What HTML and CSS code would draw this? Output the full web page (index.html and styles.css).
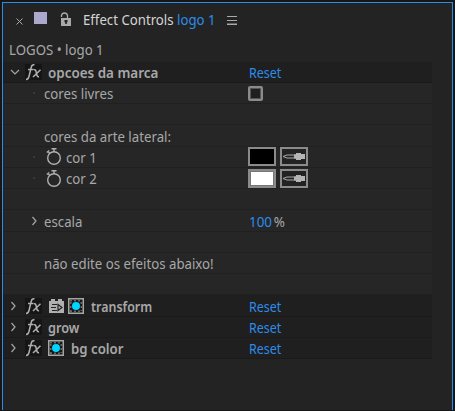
FILE: index.html
```html
<!DOCTYPE html>
<html lang="pt">
<head>
<meta charset="utf-8">
<title>Effect Controls</title>
<link rel="stylesheet" href="styles.css">
</head>
<body>
<svg class="defs" aria-hidden="true">
  <symbol id="right" viewBox="0 0 7 10"><path d="M1.500 1 5 5 1.500 9" fill="none" stroke="#a5a5a5" stroke-width="1.200"/></symbol>
  <symbol id="fx" viewBox="0 0 17 18"><path fill="#151515" d="M0 1h17v16H0z"/><path d="M1 16.500c2 0 2.500-1 3-3L6.300 4c.4-2 1.400-2.500 3.200-2.200M3 6.500h5.500M9 7c1.500-.8 2 .6 2.500 3.500s1.200 3.500 2.500 3M15.500 6.800 8 14" fill="none" stroke="#b0b0b0" stroke-width="1.500"/></symbol>
  <symbol id="watch" viewBox="0 0 16 17"><circle cx="8" cy="10" r="6.300" fill="none" stroke="#b0b0b0" stroke-width="1.400"/><path d="M5.500 .8h5M8 1v3M.8 4.500 3.300 2.500M2 3.500l2 2" fill="none" stroke="#b0b0b0" stroke-width="1.400"/></symbol>
  <symbol id="dropper" viewBox="0 0 28 19"><path fill="#222" stroke="#8b8b8b" stroke-width="2" d="M1 1h26v17H1z"/><path fill="none" stroke="#aaa" d="M16 8H7L3 9.500 7 11h9"/><path fill="#b4b4b4" d="M14 7.500h2V6h5v1h4v5h-4v1h-5v-1.500h-2z"/></symbol>
  <symbol id="gpu" viewBox="0 0 16 16"><path fill="#a6a6a6" d="M0 0h16v16H0z"/><path fill="#171717" d="M1.500 1.500h13v13h-13z"/><path stroke="#666" stroke-width="2" stroke-dasharray="2 2" d="M2 2.500h12M2 13.500h12M2.500 4v9M13.500 4v9"/><circle cx="8" cy="8" r="4" fill="#00d5ff"/></symbol>
</svg>
<main class="panel">
  <header class="tab">
    <svg class="close" viewBox="0 0 7 7"><path d="m.5.5 6 6m0-6-6 6" stroke="#aaa"/></svg>
    <i class="swatch"></i>
    <svg class="lock" viewBox="0 0 12 14"><path d="M1.500 5V3.500Q2 1 4.500 1t3 2.500V6" fill="none" stroke="#aaa" stroke-width="1.300"/><path fill="#aaa" d="M1 6h10v8H1z"/><path fill="#222" d="M4.500 8h3v2l-.7.500V12H5.200v-1.500L4.500 10z"/></svg>
    <span class="t title">Effect Controls <b>logo 1</b></span>
    <svg class="menu" viewBox="0 0 10 10"><path d="M0 .5h10M0 4.500h10M0 8.500h10" stroke="#aaa"/><path d="M0 7.500h10" stroke="#666"/></svg>
  </header>
  <div class="source"><span class="t wide">LOGOS • logo 1</span></div>
  <section class="list">
    <div class="row head"><svg class="down" viewBox="0 0 10 6"><path d="m1 1 4 4 4-4" fill="none" stroke="#a5a5a5" stroke-width="1.200"/></svg><svg class="fx"><use href="#fx"/></svg><span class="t name wider">opcoes da marca</span><a class="t value">Reset</a></div>
    <div class="row"><i class="dot"></i><span class="t wide">cores livres</span><i class="value check"></i></div>
    <div class="row"></div>
    <div class="row"><span class="t wide lone">cores da arte lateral:</span></div>
    <div class="row"><i class="dot"></i><svg class="watch"><use href="#watch"/></svg><span class="t wide">cor 1</span><div class="value pick"><i class="well black"></i><svg class="dropper"><use href="#dropper"/></svg></div></div>
    <div class="row"><i class="dot"></i><svg class="watch"><use href="#watch"/></svg><span class="t wide">cor 2</span><div class="value pick"><i class="well"></i><svg class="dropper"><use href="#dropper"/></svg></div></div>
    <div class="row"></div>
    <div class="row"><svg class="right inner"><use href="#right"/></svg><span class="t wide">escala</span><span class="t wider value pct">100<em>%</em></span></div>
    <div class="row"></div>
    <div class="row"><span class="t wide lone">não edite os efeitos abaixo!</span></div>
    <div class="row"></div>
    <div class="row head"><svg class="right"><use href="#right"/></svg><svg class="fx"><use href="#fx"/></svg><svg class="brick" viewBox="0 0 15 14"><path fill="#b0b0b0" d="M2 2V0h4v2h3V0h4v2h2v12H0V2z"/><path d="M3 5.500h5M2 8.500h5M3 11.500h5" stroke="#222" stroke-width="1.200"/><path fill="none" stroke="#222" stroke-width="1.200" d="M9 5.500 13 8.500 9 11.500z"/></svg><svg class="gpu"><use href="#gpu"/></svg><span class="t name">transform</span><a class="t value">Reset</a></div>
    <div class="row head"><svg class="right"><use href="#right"/></svg><svg class="fx"><use href="#fx"/></svg><span class="t name mid">grow</span><a class="t value">Reset</a></div>
    <div class="row head"><svg class="right"><use href="#right"/></svg><svg class="fx"><use href="#fx"/></svg><svg class="gpu"><use href="#gpu"/></svg><span class="t name wide">bg color</span><a class="t value">Reset</a></div>
  </section>
</main>
</body>
</html>
```
FILE: styles.css
```css
* { box-sizing: border-box; }
body { margin: 0; height: 411px; overflow: hidden; padding: 2px 2px 1px; background: #161616; color: #a8a8a8; font: 15px/20px "Noto Sans", sans-serif; }
.defs { position: absolute; width: 0; height: 0; }
svg, i { flex: none; display: block; }
.panel { width: 451px; height: 408px; border: 1px solid #2d8ceb; border-bottom: 0; background: #232323; }
.t { display: block; white-space: nowrap; transform: scaleX(.83); transform-origin: 0 50%; }
.wide { transform: scaleX(.882); }
.wider { transform: scaleX(.895); }
.mid { transform: scaleX(.85); }
.tab { display: flex; height: 34px; align-items: center; padding-left: 13px; }
.close { width: 7px; height: 7px; margin-top: 2px; }
.swatch { width: 13px; height: 12px; background: #aaa8cc; margin: -4px 13px 0 11px; }
.lock { width: 12px; height: 14px; margin-top: -3px; }
.title { width: 144px; margin: -2px 0 0 11px; color: #d5d5d5; transform: scaleX(.88); }
.title b { font-weight: 400; color: #2d8ceb; }
.menu { width: 10px; height: 10px; margin-top: 1px; }
.source { height: 24.7px; padding: 2px 0 0 6px; }
.list { width: 429px; }
.row { display: flex; align-items: center; height: 21.25px; position: relative; background: #262626; border-bottom: 1px solid #202020; }
.head { background: #1f1f1f; border-bottom-color: #1a1a1a; padding-left: 8px; }
.down { width: 10px; height: 6px; margin: 0 5px 0 -1px; }
.right { width: 7px; height: 10px; margin: 0 8px 0 -1px; }
.inner { margin: 0 6px 0 28px; }
.fx { width: 17px; height: 18px; }
.name { font-weight: 600; margin-left: 6px; }
.value { position: absolute; left: 246px; color: #2d8ceb; }
.dot { width: 2px; height: 2px; margin: 0 9px 0 30px; background: #393939; }
.lone { margin-left: 41px; }
.check { left: 245px; width: 15px; height: 15px; border: 2px solid #8b8b8b; border-radius: 2px; background: #1f1f1f; box-shadow: inset 0 0 0 1px #555; }
.watch { width: 16px; height: 17px; margin: 0 4px 0 2px; }
.pick { display: flex; gap: 4px; left: 245px; }
.well { width: 28px; height: 19px; border: 2px solid #8b8b8b; background: #fff; box-shadow: inset 0 0 0 1px #777; }
.black { background: #000; box-shadow: none; }
.dropper { width: 28px; height: 19px; }
.pct em { font-style: normal; color: #a8a8a8; margin-left: 2px; }
.brick { width: 15px; height: 14px; margin: 0 -2px 0 7px; }
.gpu { width: 16px; height: 16px; margin-left: 6px; }
.gpu + .name { margin-left: 7px; }
```
